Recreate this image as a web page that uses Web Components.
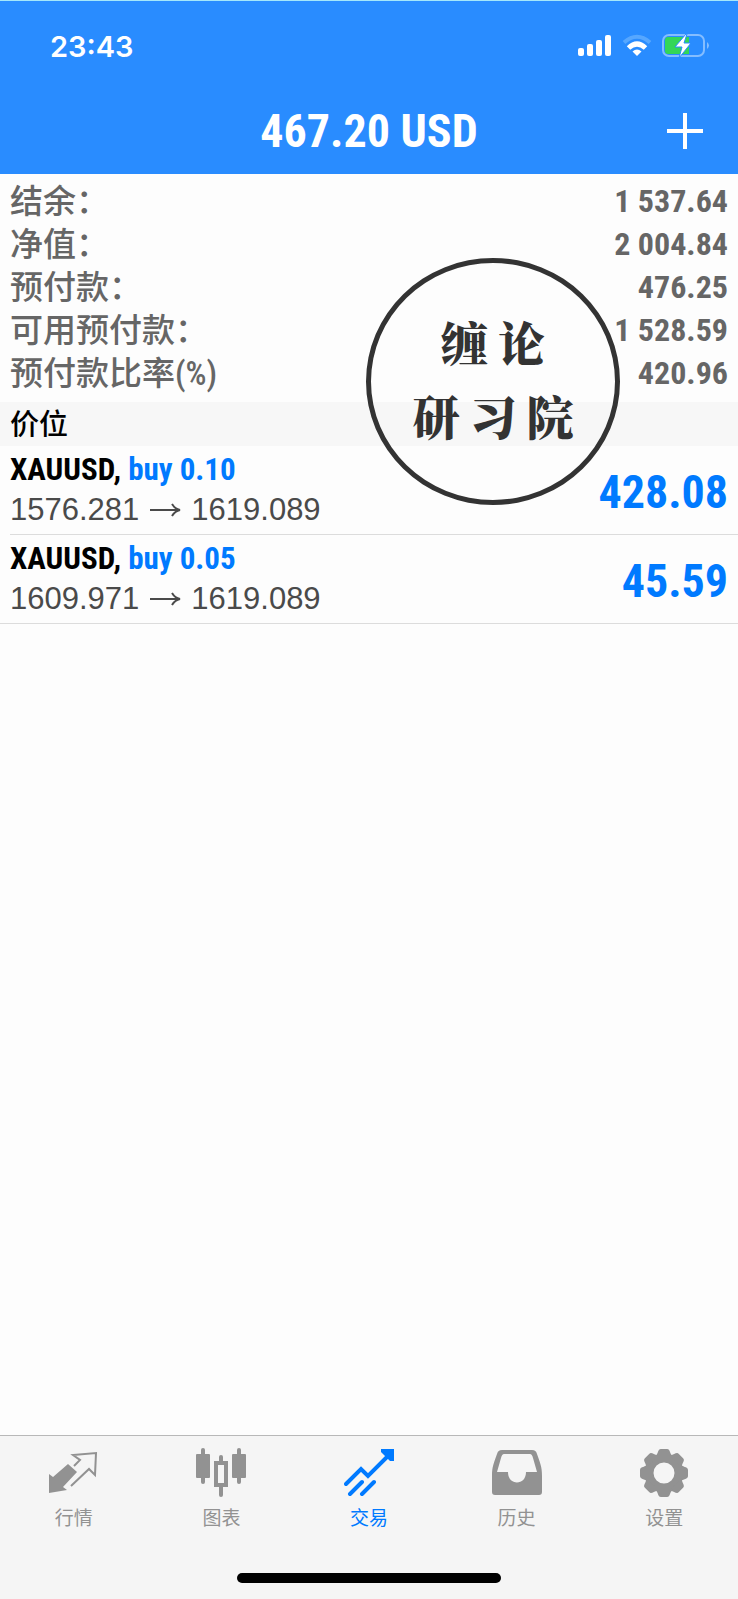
<!DOCTYPE html>
<html lang="zh-CN">
<head>
<meta charset="UTF-8">
<meta name="viewport" content="width=device-width, initial-scale=1.0">
<title>交易</title>
<style>
  body {
    margin: 0;
    background: #fdfdfd;
    font-family: "Liberation Sans", "Noto Sans CJK SC", sans-serif;
    --narrow: "Liberation Sans Narrow", "Roboto Condensed", "Liberation Sans", "Noto Sans CJK SC", sans-serif;
    --blue: #007aff;
  }
</style>
</head>
<body>
<trade-app>
  <app-header slot="header" time="23:43">467.20 USD</app-header>
  <account-row slot="account" label="结余：">1 537.64</account-row>
  <account-row slot="account" label="净值：">2 004.84</account-row>
  <account-row slot="account" label="预付款：">476.25</account-row>
  <account-row slot="account" label="可用预付款：">1 528.59</account-row>
  <account-row slot="account" label="预付款比率(%)">420.96</account-row>
  <round-stamp slot="stamp" lines="缠论,研习院"></round-stamp>
  <span slot="title">价位</span>
  <trade-position symbol="XAUUSD" side="buy 0.10" open="1576.281" price="1619.089">428.08</trade-position>
  <trade-position symbol="XAUUSD" side="buy 0.05" open="1609.971" price="1619.089">45.59</trade-position>
  <tab-bar slot="tabs">
    <tab-item icon="quotes" href="#quotes">行情</tab-item>
    <tab-item icon="chart" href="#chart">图表</tab-item>
    <tab-item icon="trade" href="#trade" active>交易</tab-item>
    <tab-item icon="history" href="#history">历史</tab-item>
    <tab-item icon="settings" href="#settings">设置</tab-item>
  </tab-bar>
</trade-app>

<script>
class TradeApp extends HTMLElement {
  constructor() {
    super();
    this.attachShadow({ mode: 'open' });
    this.shadowRoot.innerHTML = `
      <style>
        :host {
          display: flex;
          flex-direction: column;
          min-height: 100vh;
        }
        main { flex: 1; }
        .account {
          position: relative;
          padding: 6px 10px 7px;
        }
        h2 {
          margin: 0;
          padding: 2px 10px 0;
          background: #f7f7f7;
          font-size: 29px;
          font-weight: 500;
          line-height: 42px;
          color: #000;
        }
      </style>
      <slot name="header"></slot>
      <main>
        <section class="account">
          <slot name="account"></slot>
          <slot name="stamp"></slot>
        </section>
        <h2><slot name="title"></slot></h2>
        <slot></slot>
      </main>
      <slot name="tabs"></slot>
    `;
  }
}

class AppHeader extends HTMLElement {
  constructor() {
    super();
    this.attachShadow({ mode: 'open' });
    const time = this.getAttribute('time') || '00:00';
    this.shadowRoot.innerHTML = `
      <style>
        :host {
          display: block;
          background: #298cff;
          border-top: 1px solid #a5e8fb;
          color: #fff;
        }
        .status {
          display: flex;
          align-items: center;
          justify-content: space-between;
          height: 90px;
          padding: 0 28px 0 50px;
          font: 600 29px Inter, sans-serif;
        }
        .bar {
          display: grid;
          grid-template-columns: 1fr auto 1fr;
          align-items: center;
          padding: 0 31px 3px;
        }
        h1 {
          grid-column: 2;
          margin: 0;
          font: bold 46px var(--narrow);
          line-height: 80px;
        }
        button {
          justify-self: end;
          padding: 4px;
          border: 0;
          background: none;
          color: inherit;
        }
        svg { display: block; }
      </style>
      <div class="status">
        <time>${time}</time>
        <svg width="132" height="24" viewBox="0 0 132 24" aria-hidden="true">
          <g fill="#fff">
            <rect x="0" y="14" width="6" height="8" rx="2"/>
            <rect x="9" y="10" width="6" height="12" rx="2"/>
            <rect x="18" y="6" width="6" height="16" rx="2"/>
            <rect x="27" y="1" width="6" height="21" rx="2"/>
            <path d="M59 22 54.500 17.500Q59 13.500 63.500 17.500Z"/>
          </g>
          <g fill="none" stroke-width="4">
            <path d="M46 8.500Q59-3 72 8.500" stroke="#65b0ff" stroke-opacity=".75"/>
            <path d="M50.500 14Q59 6 67.500 14" stroke="#fff" stroke-width="5"/>
          </g>
          <rect x="85" y="1" width="41" height="21" rx="6" fill="none" stroke="#84bdff" stroke-width="2"/>
          <path d="M90 3h21v17H90a3 3 0 0 1-3-3V6a3 3 0 0 1 3-3z" fill="#33d657"/>
          <path d="M129 8q4 3.500 0 7z" fill="#84bdff"/>
          <path d="M108 0 97 13h7l-3 11 12-15h-7l3-9z" fill="#fff" stroke="#298cff" stroke-width="1"/>
        </svg>
      </div>
      <div class="bar">
        <h1><slot></slot></h1>
        <button type="button" aria-label="新订单">
          <svg width="36" height="36" viewBox="0 0 36 36"><path d="M18 0v36M0 18h36" stroke="#fff" stroke-width="4"/></svg>
        </button>
      </div>
    `;
  }
}

class AccountRow extends HTMLElement {
  constructor() {
    super();
    this.attachShadow({ mode: 'open' });
    const label = this.getAttribute('label') || '';
    this.shadowRoot.innerHTML = `
      <style>
        :host {
          display: flex;
          align-items: center;
          justify-content: space-between;
          color: #666;
          font-family: var(--narrow);
          line-height: 43px;
        }
        .label { font-size: 33px; font-weight: 500; }
        .value { font-size: 32px; font-weight: bold; }
      </style>
      <span class="label">${label}</span>
      <span class="value"><slot></slot></span>
    `;
  }
}

class RoundStamp extends HTMLElement {
  constructor() {
    super();
    this.attachShadow({ mode: 'open' });
    const lines = (this.getAttribute('lines') || '').split(',');
    const rows = lines.map(line =>
      `<div>${[...line].map(c => `<span>${c}</span>`).join('')}</div>`
    ).join('');
    this.shadowRoot.innerHTML = `
      <style>
        /* lies over the account rows and the first position */
        :host {
          position: absolute;
          top: 84px;
          right: 118px;
          z-index: 1;
          box-sizing: border-box;
          display: flex;
          flex-direction: column;
          justify-content: center;
          width: 254px;
          height: 247px;
          padding-bottom: 8px;
          border: 5px solid #333;
          border-radius: 50%;
          color: #333;
          font: 900 47px "Noto Serif CJK SC", "Noto Sans CJK SC", serif;
          line-height: 74px;
          pointer-events: none;
        }
        div {
          display: flex;
          justify-content: center;
          gap: 10px;
        }
      </style>
      ${rows}
    `;
  }
}

class TradePosition extends HTMLElement {
  constructor() {
    super();
    this.attachShadow({ mode: 'open' });
    const symbol = this.getAttribute('symbol');
    const side = this.getAttribute('side');
    const open = this.getAttribute('open');
    const price = this.getAttribute('price');
    this.shadowRoot.innerHTML = `
      <style>
        :host {
          display: flex;
          align-items: center;
          justify-content: space-between;
          margin-left: 10px;
          padding: 3px 10px 4px 0;
          border-bottom: 1px solid #dcdcdc;
        }
        :host(:last-of-type) {
          margin-left: 0;
          padding-left: 10px;
        }
        .name {
          font: bold 31px var(--narrow);
          line-height: 41px;
          color: #000;
        }
        .side, .profit { color: var(--blue); }
        .prices {
          display: flex;
          align-items: center;
          gap: 10px;
          font-size: 31px;
          line-height: 40px;
          color: #4a4a4a;
        }
        .profit {
          padding-top: 4px;
          font: bold 46px var(--narrow);
        }
      </style>
      <div>
        <div class="name">${symbol}, <span class="side">${side}</span></div>
        <div class="prices">
          <span>${open}</span>
          <svg width="32" height="16" viewBox="0 0 32 16" fill="none" stroke="currentColor" stroke-width="2" aria-hidden="true">
            <path d="M1 8h30M23 2q3 5 8 6-5 1-8 6"/>
          </svg>
          <span>${price}</span>
        </div>
      </div>
      <div class="profit"><slot></slot></div>
    `;
  }
}

class TabBar extends HTMLElement {
  constructor() {
    super();
    this.attachShadow({ mode: 'open' });
    this.shadowRoot.innerHTML = `
      <style>
        :host {
          display: block;
          background: #f5f5f5;
          border-top: 1px solid #b8b8b8;
        }
        nav {
          display: flex;
          padding-top: 12px;
        }
        .home {
          width: 264px;
          height: 10px;
          margin: 39px auto 16px;
          border-radius: 5px;
          background: #000;
        }
      </style>
      <nav><slot></slot></nav>
      <div class="home"></div>
    `;
  }
}

const TOOTH = 'M15 9C20 7 18 1 22 1h6c4 0 2 6 7 8z';
const teeth = [0, 45, 90, 135, 180, 225, 270, 315]
  .map(deg => `<path d="${TOOTH}" transform="rotate(${deg} 25 25)"/>`)
  .join('');

const ICONS = {
  quotes: `
    <path d="M0 26v19l18-3-4-3 14-15-9-8L4 29z" fill="currentColor"/>
    <path d="M22 38 40 21 46 27 47 5 24 7 31 12 25 18" fill="none" stroke="currentColor" stroke-width="2"/>`,
  chart: `
    <g fill="currentColor">
      <rect y="6" width="14" height="24" rx="1"/><rect x="5" width="4" height="36" rx="2"/>
      <rect x="36" y="6" width="14" height="24" rx="1"/><rect x="41" width="4" height="36" rx="2"/>
      <rect x="23" y="7" width="4" height="9" rx="2"/><rect x="23" y="36" width="4" height="13" rx="2"/>
    </g>
    <rect x="20" y="15" width="10" height="22" fill="none" stroke="currentColor" stroke-width="4"/>`,
  trade: `
    <path d="M2 36 17 21 24 28 47 5M6 46 18 34M18 46 30 34" fill="none" stroke="currentColor" stroke-width="4" stroke-linecap="round"/>
    <path d="M37 1h13v12h-4L37 4z" fill="currentColor"/>`,
  history: `
    <path fill-rule="evenodd" fill="currentColor" d="M10 2h30c3 0 4 1 5 4 3 9 5 12 5 22v16q0 3-3 3H3q-3 0-3-3V28C0 18 2 15 5 6c1-3 2-4 5-4zM12 6q-2 0-3 4L5 24h11c0 14 18 14 18 0h11L41 10q-1-4-3-4z"/>`,
  settings: `
    <circle cx="25" cy="25" r="15" fill="none" stroke="currentColor" stroke-width="9"/>
    <g fill="currentColor">${teeth}</g>`
};

class TabItem extends HTMLElement {
  constructor() {
    super();
    this.attachShadow({ mode: 'open' });
    const icon = ICONS[this.getAttribute('icon')] || '';
    const href = this.getAttribute('href') || '#';
    this.shadowRoot.innerHTML = `
      <style>
        :host {
          flex: 1;
          color: #929292;
        }
        :host([active]) { color: var(--blue); }
        a {
          display: flex;
          flex-direction: column;
          align-items: center;
          gap: 6px;
          color: inherit;
          font-size: 19px;
          line-height: 30px;
          text-decoration: none;
        }
      </style>
      <a href="${href}">
        <svg width="50" height="50" viewBox="0 0 50 50" aria-hidden="true">${icon}</svg>
        <span><slot></slot></span>
      </a>
    `;
  }
}

customElements.define('trade-app', TradeApp);
customElements.define('app-header', AppHeader);
customElements.define('account-row', AccountRow);
customElements.define('round-stamp', RoundStamp);
customElements.define('trade-position', TradePosition);
customElements.define('tab-bar', TabBar);
customElements.define('tab-item', TabItem);
</script>
</body>
</html>
